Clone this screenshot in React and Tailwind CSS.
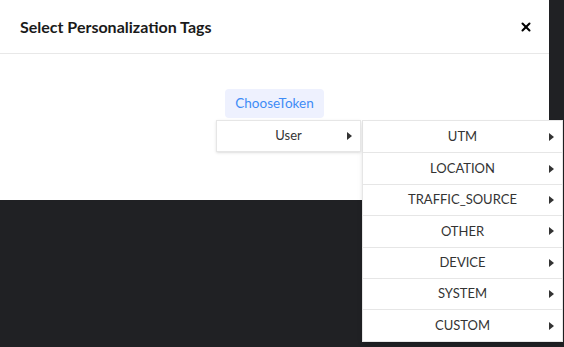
import { X } from 'lucide-react'

const GROUPS = ['UTM', 'LOCATION', 'TRAFFIC_SOURCE', 'OTHER', 'DEVICE', 'SYSTEM', 'CUSTOM']

function Caret() {
  return (
    <svg width="5" height="8" viewBox="0 0 5 8" className="absolute right-[8px] top-1/2 -translate-y-1/2">
      <path d="M0 0 L5 4 L0 8 Z" fill="#333" />
    </svg>
  )
}

export default function App() {
  return (
    <div className="relative h-[347px] w-[564px] overflow-hidden bg-[#202124] font-['Lato',sans-serif]">
      <div className="h-[200px] w-[549px] bg-white">
        <div className="flex h-[54px] items-center justify-between border-b border-[#e8e8e8] pl-5 pr-[16px]">
          <h2 className="text-[16px] font-bold text-[#1a1a1a]">Select Personalization Tags</h2>
          <X size={14} strokeWidth={3.5} className="text-black" />
        </div>
        <div className="relative flex justify-center pt-[35px]">
          <button className="h-[29px] w-[99px] rounded-sm bg-[#eef1fe] text-[13.5px] text-[#3f8cf6]">
            ChooseToken
          </button>
          <div className="absolute left-[216px] top-[66px] flex">
            <div className="relative flex h-[32px] w-[145px] items-center justify-center border border-[#e6e6e6] bg-white shadow-sm">
              <span className="text-[13px] text-[#333]">User</span>
              <Caret />
            </div>
            <div className="ml-px w-[201px] border border-[#e6e6e6] bg-white shadow-md">
              {GROUPS.map((g, i) => (
                <div
                  key={g}
                  className={`relative flex h-[31.4px] items-center justify-center ${i > 0 ? 'border-t border-[#e6e6e6]' : ''}`}
                >
                  <span className="text-[13px] text-[#333]">{g}</span>
                  <Caret />
                </div>
              ))}
            </div>
          </div>
        </div>
      </div>
    </div>
  )
}
